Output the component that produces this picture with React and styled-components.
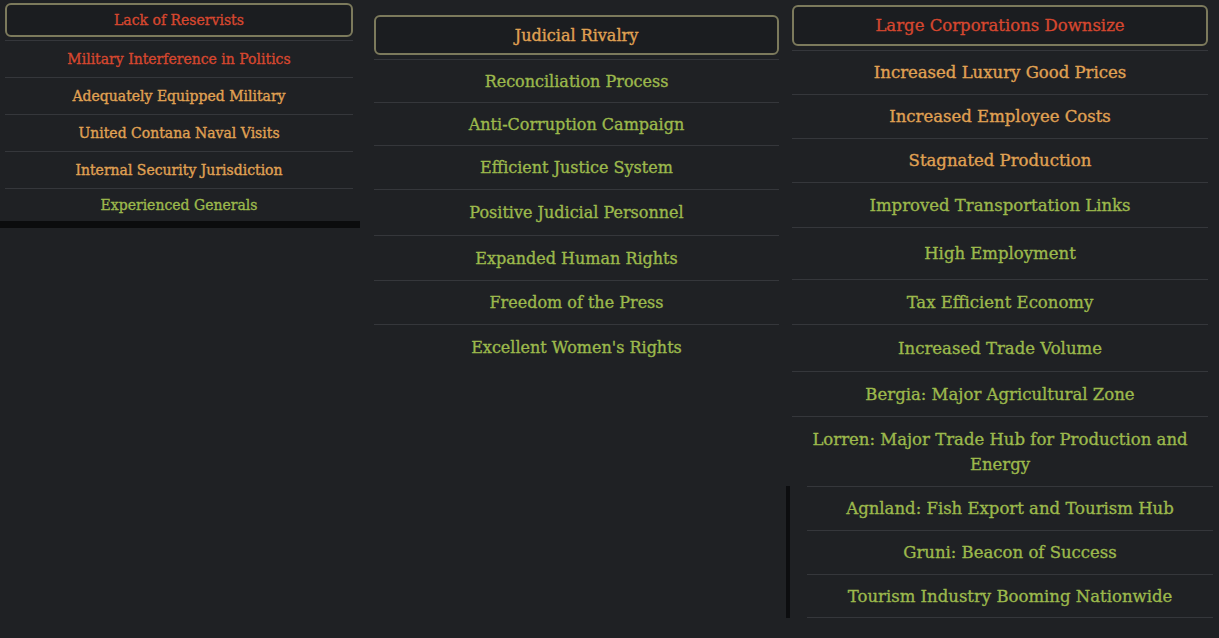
import React from 'react'
import styled, { createGlobalStyle } from 'styled-components'

const GlobalStyle = createGlobalStyle`
  html, body {
    margin: 0;
    padding: 0;
    background: #1f2124;
  }
  body {
    width: 1219px;
    height: 638px;
    overflow: hidden;
    font-family: 'DejaVu Serif', 'Liberation Serif', serif;
  }
`

const tones = {
  red: '#d6472f',
  orange: '#e0a253',
  green: '#9cb94c'
}

const Page = styled.div`
  display: flex;
  align-items: flex-start;
  height: 638px;
`

const Column = styled.section`
  display: flex;
  flex-direction: column;
  box-sizing: border-box;
  width: ${props => props.width}px;
  padding: ${props => props.pad};
  font-size: ${props => props.size}px;
  border-top: ${props => (props.topLine ? '1px solid #4e5054' : 'none')};
  -webkit-text-stroke: 0.35px currentColor;
`

const Header = styled.div`
  display: flex;
  align-items: center;
  justify-content: center;
  height: ${props => props.h}px;
  box-sizing: border-box;
  border: 2px solid #7c7a5c;
  border-radius: 6px;
  background: #1b1d20;
  color: ${props => tones[props.tone]};
  margin-bottom: ${props => props.gap}px;
`

const Row = styled.div`
  display: flex;
  align-items: center;
  justify-content: center;
  text-align: center;
  box-sizing: border-box;
  min-height: ${props => props.h}px;
  padding: 0 10px;
  line-height: 25px;
  border-top: 1px solid #35373b;
  color: ${props => tones[props.tone]};
`

const ShadowBar = styled.div`
  height: 7px;
  margin: 0 -7px 0 -5px;
  background: #0b0c0d;
`

const SubList = styled.div`
  display: flex;
  flex-direction: column;
  margin: 0 -5px 0 -6px;
  padding-left: 17px;
  border-left: 4px solid #0c0d0f;

  & > div:last-child {
    border-bottom: 1px solid #35373b;
  }
`

const militaryRows = [
  { text: 'Military Interference in Politics', tone: 'red', h: 37 },
  { text: 'Adequately Equipped Military', tone: 'orange', h: 37 },
  { text: 'United Contana Naval Visits', tone: 'orange', h: 37 },
  { text: 'Internal Security Jurisdiction', tone: 'orange', h: 37 },
  { text: 'Experienced Generals', tone: 'green', h: 33 }
]

const judicialRows = [
  { text: 'Reconciliation Process', tone: 'green', h: 43 },
  { text: 'Anti-Corruption Campaign', tone: 'green', h: 43 },
  { text: 'Efficient Justice System', tone: 'green', h: 44 },
  { text: 'Positive Judicial Personnel', tone: 'green', h: 46 },
  { text: 'Expanded Human Rights', tone: 'green', h: 45 },
  { text: 'Freedom of the Press', tone: 'green', h: 44 },
  { text: "Excellent Women's Rights", tone: 'green', h: 45 }
]

const economyRows = [
  { text: 'Increased Luxury Good Prices', tone: 'orange', h: 44 },
  { text: 'Increased Employee Costs', tone: 'orange', h: 44 },
  { text: 'Stagnated Production', tone: 'orange', h: 44 },
  { text: 'Improved Transportation Links', tone: 'green', h: 45 },
  { text: 'High Employment', tone: 'green', h: 52 },
  { text: 'Tax Efficient Economy', tone: 'green', h: 45 },
  { text: 'Increased Trade Volume', tone: 'green', h: 47 },
  { text: 'Bergia: Major Agricultural Zone', tone: 'green', h: 45 },
  { text: 'Lorren: Major Trade Hub for Production and Energy', tone: 'green', h: 70 }
]

const regionRows = [
  { text: 'Agnland: Fish Export and Tourism Hub', tone: 'green', h: 44 },
  { text: 'Gruni: Beacon of Success', tone: 'green', h: 44 },
  { text: 'Tourism Industry Booming Nationwide', tone: 'green', h: 44 }
]

const App = () => (
  <>
    <GlobalStyle />
    <Page>
      <Column width={360} pad="3px 7px 0 5px" size={14}>
        <Header h={34} gap={3} tone="red">Lack of Reservists</Header>
        {militaryRows.map(r => (
          <Row key={r.text} h={r.h} tone={r.tone}>{r.text}</Row>
        ))}
        <ShadowBar />
      </Column>

      <Column width={427} pad="15px 8px 0 14px" size={16}>
        <Header h={40} gap={4} tone="orange">Judicial Rivalry</Header>
        {judicialRows.map(r => (
          <Row key={r.text} h={r.h} tone={r.tone}>{r.text}</Row>
        ))}
      </Column>

      <Column width={432} pad="5px 11px 0 5px" size={16.5}>
        <Header h={41} gap={4} tone="red">Large Corporations Downsize</Header>
        {economyRows.map(r => (
          <Row key={r.text} h={r.h} tone={r.tone}>{r.text}</Row>
        ))}
        <SubList>
          {regionRows.map(r => (
            <Row key={r.text} h={r.h} tone={r.tone}>{r.text}</Row>
          ))}
        </SubList>
      </Column>
    </Page>
  </>
)

export default App
